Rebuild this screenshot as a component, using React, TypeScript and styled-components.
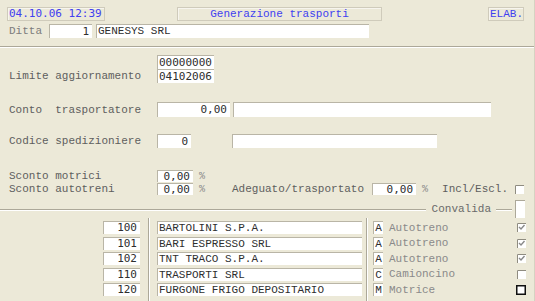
import React, { FC } from 'react';
import styled, { createGlobalStyle, css } from 'styled-components';

const GlobalStyle = createGlobalStyle`
  html, body {
    margin: 0;
    padding: 0;
    background: #ece9d8;
  }
  * {
    box-sizing: border-box;
  }
`;

const mono = `"Courier New", "Nimbus Mono PS", "Nimbus Mono L", "FreeMono", "Liberation Mono", monospace`;
const sansMono = `"DejaVu Sans Mono", "Liberation Mono", monospace`;

const Frame = styled.div`
  width: 535px;
  height: 301px;
  overflow: hidden;
  background: #ece9d8;
  display: flex;
  flex-direction: column;
  font-family: ${mono};
  font-size: 11px;
  color: #5e5e5e;
  border-right: 1px solid #d6d2c2;
  margin-right: 2px;
`;

const Header = styled.div`
  height: 47px;
  padding: 7px 0 0 7px;
  border-bottom: 1px solid #aca899;
  box-shadow: 0 1px 0 #ffffff;
`;

const TopRow = styled.div`
  display: flex;
  height: 14px;
`;

const InfoBox = styled.div<{ $w: number; $ml?: number; $align?: string; $sans?: boolean }>`
  ${({ $w, $ml = 0, $align = 'left', $sans }) => css`
    width: ${$w}px;
    margin-left: ${$ml}px;
    height: 14px;
    line-height: 12px;
    border: 1px solid #cfcbbb;
    box-shadow: inset 1px 1px 0 #f7f5ee;
    color: #4040f0;
    text-align: ${$align};
    padding: 0 1px;
    font-family: ${$sans ? sansMono : mono};
    white-space: pre;
  `}
`;

const DittaRow = styled.div`
  display: flex;
  align-items: center;
  height: 14px;
  margin-top: 3px;
`;

const Label = styled.span<{ $w?: number; $light?: boolean; $pl?: number }>`
  ${({ $w, $light, $pl = 0 }) => css`
    ${$w ? `width: ${$w}px; flex: none;` : ''}
    padding-left: ${$pl}px;
    color: ${$light ? '#7c7c7c' : '#5e5e5e'};
    white-space: pre;
  `}
`;

const Field = styled.div<{ $w: number; $h?: number; $ml?: number; $right?: boolean; $sans?: boolean }>`
  ${({ $w, $h = 14, $ml = 0, $right, $sans }) => css`
    width: ${$w}px;
    height: ${$h}px;
    line-height: ${$h - 1}px;
    margin-left: ${$ml}px;
    flex: none;
    background: #ffffff;
    border-top: 1px solid #b9b5a6;
    border-left: 1px solid #b9b5a6;
    color: #2e2e2e;
    font-family: ${$sans ? sansMono : mono};
    text-align: ${$right ? 'right' : 'left'};
    padding: 0 3px 0 1px;
    white-space: pre;
    overflow: hidden;
  `}
`;

const Form = styled.div`
  display: flex;
  flex-direction: column;
  padding-left: 9px;
`;

const FormRow = styled.div<{ $mt: number; $h?: number }>`
  ${({ $mt, $h = 14 }) => css`
    display: flex;
    align-items: center;
    margin-top: ${$mt}px;
    height: ${$h}px;
  `}
`;

const Pct = styled.span`
  margin-left: 6px;
  color: #8a8a8a;
  font-size: 10px;
`;

const GroupLine = styled.div`
  display: flex;
  align-items: center;
  height: 18px;
  margin-top: 5px;
`;

const Rule = styled.div<{ $w?: number }>`
  ${({ $w }) => css`
    ${$w ? `width: ${$w}px; flex: none;` : 'flex: 1;'}
    height: 2px;
    border-top: 1px solid #aca899;
    border-bottom: 1px solid #ffffff;
    margin-top: 2px;
  `}
`;

const Legend = styled.span`
  padding: 0 5px 0 6px;
  color: #6a6a6a;
`;

const ConvBox = styled.div`
  width: 10px;
  height: 18px;
  margin: 0 9px 0 3px;
  background: #ffffff;
  border-left: 1px solid #aca899;
  border-top: 1px solid #aca899;
`;

const List = styled.div`
  flex: 1;
  display: flex;
  padding-left: 103px;
`;

const Column = styled.div<{ $w?: number }>`
  ${({ $w }) => css`
    ${$w ? `width: ${$w}px; flex: none;` : 'flex: 1;'}
    display: flex;
    flex-direction: column;
    gap: 2.5px;
    padding-top: 3px;
  `}
`;

const VSep = styled.div<{ $ml: number; $mr: number }>`
  ${({ $ml, $mr }) => css`
    width: 2px;
    flex: none;
    margin: 0 ${$mr}px 0 ${$ml}px;
    border-left: 1px solid #aca899;
    border-right: 1px solid #ffffff;
  `}
`;

const TypeRow = styled.div`
  display: flex;
  align-items: center;
  height: 13px;
  padding-right: 8px;
`;

const Letter = styled.div`
  width: 10px;
  height: 13px;
  line-height: 12px;
  background: #ffffff;
  border-top: 1px solid #b9b5a6;
  border-left: 1px solid #b9b5a6;
  color: #2e2e2e;
  text-align: center;
  flex: none;
`;

const TypeText = styled.span`
  margin-left: 6px;
  flex: 1;
  color: #8a8a8a;
`;

const Spacer = styled.span<{ $w: number }>`
  width: ${({ $w }) => $w}px;
  flex: none;
`;

const CheckWrap = styled.span`
  display: flex;
  margin-left: 7px;
`;

type CheckKind = 'checked' | 'empty' | 'focus';

const CheckBox: FC<{ kind: CheckKind }> = ({ kind }) => {
  if (kind === 'focus') {
    return (
      <svg width="10" height="10" viewBox="0 0 10 10" style={{ flex: 'none' }}>
        <rect x="0.75" y="0.75" width="8.5" height="8.5" fill="#fff" stroke="#111" strokeWidth="1.5" />
      </svg>
    );
  }
  return (
    <svg width="9" height="9" viewBox="0 0 9 9" style={{ flex: 'none' }}>
      <rect x="0" y="0" width="9" height="9" fill="#fff" />
      <path d="M0.5 9V0.5H9" fill="none" stroke="#8f8c80" strokeWidth="1" />
      {kind === 'checked' && (
        <path d="M2 4l2 2 3.5-4" fill="none" stroke="#8a8a8a" strokeWidth="1.4" />
      )}
    </svg>
  );
};

const carriers = [
  { code: '100', name: 'BARTOLINI S.P.A.', letter: 'A', type: 'Autotreno', check: 'checked' as CheckKind },
  { code: '101', name: 'BARI ESPRESSO SRL', letter: 'A', type: 'Autotreno', check: 'checked' as CheckKind },
  { code: '102', name: 'TNT TRACO S.P.A.', letter: 'A', type: 'Autotreno', check: 'checked' as CheckKind },
  { code: '110', name: 'TRASPORTI SRL', letter: 'C', type: 'Camioncino', check: 'empty' as CheckKind },
  { code: '120', name: 'FURGONE FRIGO DEPOSITARIO', letter: 'M', type: 'Motrice', check: 'focus' as CheckKind },
];

const App: FC = () => {
  return (
    <>
      <GlobalStyle />
      <Frame>
        <Header>
          <TopRow>
            <InfoBox $w={98} $sans>04.10.06 12:39</InfoBox>
            <InfoBox $w={205} $ml={72} $align="center">Generazione trasporti</InfoBox>
            <InfoBox $w={36} $ml={106} $align="center">ELAB.</InfoBox>
          </TopRow>
          <DittaRow>
            <Label $w={42} $pl={2} $light>Ditta</Label>
            <Field $w={43} $right $sans>1</Field>
            <Field $w={273} $ml={4}>GENESYS SRL</Field>
          </DittaRow>
        </Header>

        <Form>
          <FormRow $mt={8}>
            <Label $w={148} />
            <Field $w={57} $sans>00000000</Field>
          </FormRow>
          <FormRow $mt={0}>
            <Label $w={148}>Limite aggiornamento</Label>
            <Field $w={57} $sans>04102006</Field>
          </FormRow>
          <FormRow $mt={19} $h={15}>
            <Label $w={148}>Conto  trasportatore</Label>
            <Field $w={73} $h={15} $right $sans>0,00</Field>
            <Field $w={258} $h={15} $ml={3} />
          </FormRow>
          <FormRow $mt={17}>
            <Label $w={148}>Codice spedizioniere</Label>
            <Field $w={34} $right $sans>0</Field>
            <Field $w={205} $ml={41} />
          </FormRow>
          <FormRow $mt={22} $h={12}>
            <Label $w={148}>Sconto motrici</Label>
            <Field $w={36} $h={12} $right $sans>0,00</Field>
            <Pct>%</Pct>
          </FormRow>
          <FormRow $mt={1} $h={12}>
            <Label $w={148}>Sconto autotreni</Label>
            <Field $w={36} $h={12} $right $sans>0,00</Field>
            <Pct>%</Pct>
            <Spacer $w={27} />
            <Label $w={140}>Adeguato/trasportato</Label>
            <Field $w={44} $h={12} $right $sans>0,00</Field>
            <Pct>%</Pct>
            <Spacer $w={14} />
            <Label>Incl/Escl.</Label>
            <CheckWrap>
              <CheckBox kind="empty" />
            </CheckWrap>
          </FormRow>
        </Form>

        <GroupLine>
          <Rule />
          <Legend>Convalida</Legend>
          <Rule $w={16} />
          <ConvBox />
        </GroupLine>

        <List>
          <Column $w={37}>
            {carriers.map((c) => (
              <Field key={c.code} $w={37} $h={13} $right $sans>
                {c.code}
              </Field>
            ))}
          </Column>
          <VSep $ml={8} $mr={7} />
          <Column $w={205}>
            {carriers.map((c) => (
              <Field key={c.code} $w={205} $h={13}>
                {c.name}
              </Field>
            ))}
          </Column>
          <VSep $ml={4} $mr={5} />
          <Column>
            {carriers.map((c) => (
              <TypeRow key={c.code}>
                <Letter>{c.letter}</Letter>
                <TypeText>{c.type}</TypeText>
                <CheckBox kind={c.check} />
              </TypeRow>
            ))}
          </Column>
        </List>
      </Frame>
    </>
  );
};

export default App;
